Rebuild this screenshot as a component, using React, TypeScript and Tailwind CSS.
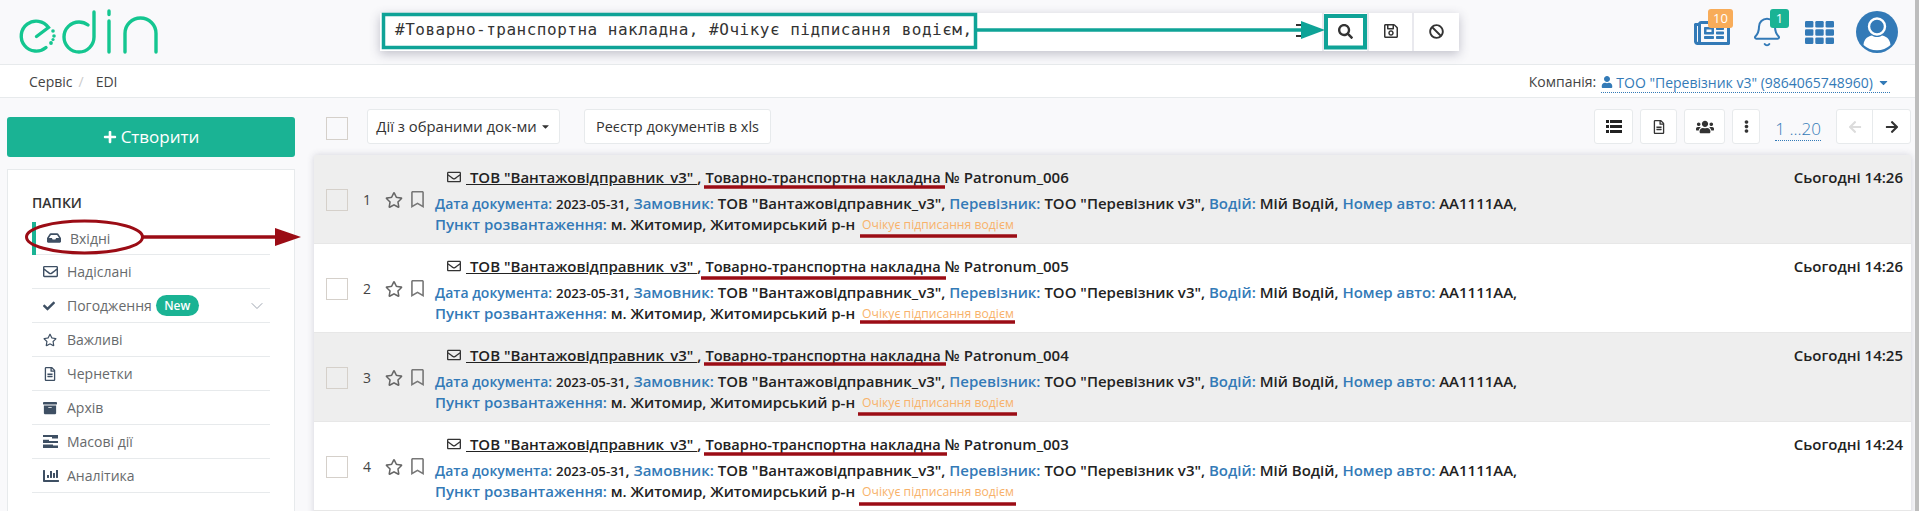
import React from "react";
import {
  FaSearch, FaRegSave, FaBan, FaRegNewspaper, FaInbox, FaRegEnvelope, FaCheck, FaRegStar, FaRegFileAlt,
  FaArchive, FaChartBar, FaRegBookmark, FaUsers, FaEllipsisV, FaArrowLeft, FaArrowRight, FaUser,
  FaPlus, FaCaretDown,
} from "react-icons/fa";
import { Bell, ChevronDown } from "lucide-react";

const rows = [
  { n: 1, id: "Patronum_006", time: "Сьогодні 14:26", grey: true },
  { n: 2, id: "Patronum_005", time: "Сьогодні 14:26", grey: false },
  { n: 3, id: "Patronum_004", time: "Сьогодні 14:25", grey: true },
  { n: 4, id: "Patronum_003", time: "Сьогодні 14:24", grey: false },
];

function Logo() {
  return (
    <svg width="150" height="50" viewBox="15 8 150 50" fill="none" stroke="#14c690" strokeWidth="3.4" strokeLinecap="round">
      <path d="M46 47.5 A15 15 0 1 1 48.5 27.5 L36.5 36.5" />
      <circle cx="53" cy="31" r="1.8" fill="#14c690" stroke="none" />
      <circle cx="54" cy="36" r="1.8" fill="#14c690" stroke="none" />
      <circle cx="53" cy="39.5" r="1.6" fill="#14c690" stroke="none" />
      <circle cx="51" cy="43" r="1.9" fill="#14c690" stroke="none" />
      <path d="M94 12 V37 A15 15 0 1 1 79 22 A15 15 0 0 1 88 25" />
      <path d="M109 11 V14.5 M109 21 V52" />
      <path d="M125 52 V33.5 A15.5 15.5 0 0 1 156 33.5 V52" />
    </svg>
  );
}

function Annotations() {
  const red = "#9b0c15";
  const teal = "#0fa397";
  const lines = [
    [704, 945, 187, 860, 1017, 236],
    [701, 946, 278, 860, 1015, 322],
    [704, 946, 364, 858, 1017, 414],
    [704, 947, 454, 859, 1016, 504],
  ];
  return (
    <svg className="absolute left-0 top-0 pointer-events-none" width="1919" height="511" fill="none">
      <rect x="383.5" y="14.5" width="592" height="33" stroke={teal} strokeWidth="3.5" />
      <path d="M977 30 H1303" stroke={teal} strokeWidth="3.5" />
      <path d="M1296 25 H1302 M1296 36 H1302" stroke="#333" strokeWidth="2" />
      <path d="M1301 21 L1325 30 L1301 39 Z" fill={teal} />
      <rect x="1326" y="16" width="39" height="31.5" stroke={teal} strokeWidth="4" />
      <ellipse cx="84.5" cy="237" rx="58" ry="16" stroke={red} strokeWidth="3" />
      <path d="M142 237 H276" stroke={red} strokeWidth="3.5" />
      <path d="M275 228 L301 237 L275 246 Z" fill={red} />
      {lines.map((l, i) => (
        <g key={i} stroke={red} strokeWidth="3.5">
          <path d={`M${l[0]} ${l[2]} H${l[1]}`} />
          <path d={`M${l[3]} ${l[5]} H${l[4]}`} />
        </g>
      ))}
    </svg>
  );
}

function Header() {
  return (
    <header className="h-[65px] flex border-b border-[#e7eaec] bg-[#f9f9fb]">
      <div className="w-[380px] shrink-0 pt-[8px] pl-[15px]">
        <Logo />
      </div>
      <div className="w-[1079px] h-[38px] mt-[13px] shrink-0 flex bg-[#e9e9ee] shadow-[0_3px_10px_rgba(60,60,90,0.3)]">
        <div className="w-[942px] bg-white pl-[15px] pr-0 flex items-center h-full text-[#333] text-[16px] tracking-[0.5px] font-['DejaVu_Sans_Mono',monospace] whitespace-nowrap pb-[5px]">
          #Товарно-транспортна накладна, #Очікує підписання водієм,
        </div>
        <div className="w-[43px] ml-[2px] bg-white flex items-center justify-center text-[#333] pb-[2px]">
          <FaSearch size={15} />
        </div>
        <div className="w-[43px] ml-[2px] bg-white flex items-center justify-center text-[#333] pb-[2px]">
          <FaRegSave size={16} />
        </div>
        <div className="w-[45px] ml-[2px] bg-white flex items-center justify-center text-[#333] pb-[2px]">
          <FaBan size={15} />
        </div>
      </div>
      <div className="relative ml-[235px] mt-[15px] w-[35px] h-[30px] text-[#337ab7]">
        <FaRegNewspaper size={36} />
        <span className="absolute left-[14px] top-[-6px] w-[25px] h-[19px] rounded-[3px] bg-[#f8ac59] text-white text-[13px] leading-[19px] text-center">10</span>
      </div>
      <div className="relative ml-[22px] mt-[16px] w-[29px] h-[30px] text-[#337ab7]">
        <Bell size={32} strokeWidth={1.5} />
        <span className="absolute left-[19px] top-[-7px] w-[19px] h-[19px] rounded-[3px] bg-[#1ab394] text-white text-[13px] leading-[19px] text-center">1</span>
      </div>
      <svg className="ml-[25px] mt-[21px]" width="29" height="23" viewBox="0 0 29 23" fill="#337ab7">
        {[0, 8.3, 16.6].map((y) =>
          [0, 10.3, 20.6].map((x) => <rect key={`${x}-${y}`} x={x} y={y} width="8.4" height="6.4" rx="1.2" />)
        )}
      </svg>
      <svg className="ml-[22px] mt-[11px]" width="42" height="42" viewBox="0 0 42 42">
        <circle cx="21" cy="21" r="21" fill="#337ab7" />
        <circle cx="21" cy="15.5" r="8" fill="#337ab7" stroke="#fff" strokeWidth="2.4" />
        <path d="M7.5 34 C8 27 13 25 16 24.5 C19 26.5 23 26.5 26 24.5 C29 25 34 27 34.5 34 A20 20 0 0 1 7.5 34 Z" fill="#fff" />
      </svg>
    </header>
  );
}

function Breadcrumb() {
  return (
    <div className="h-[33px] bg-white border-b border-[#e7eaec] flex items-center pl-[29px] pr-[25px] text-[14px] text-[#444]">
      <span>Сервіс</span>
      <span className="ml-[6px] text-[#ccc]">/</span>
      <span className="ml-[12px]">EDI</span>
      <span className="ml-auto mr-[5px]">Компанія:</span>
      <span className="flex items-center text-[#337ab7] border-b border-dotted border-[#337ab7] leading-[19px] mt-[3px]">
        <FaUser size={12} className="mr-[3px]" />
        ТОО "Перевізник v3" (9864065748960)
        <FaCaretDown size={13} className="ml-[4px]" />
      </span>
    </div>
  );
}

function BulkIcon() {
  return (
    <svg width="15" height="13" viewBox="0 0 15 13" fill="#3e4f63">
      <path d="M0 0h15v3.4H9V2H0z" />
      <path d="M0 4.8h6v1.2h9v2H0z" />
      <path d="M0 9.6h10v1h5v2.4H0z" />
    </svg>
  );
}

const menuItems = [
  { icon: <FaRegEnvelope size={15} />, label: "Надіслані" },
  { icon: <FaCheck size={12} />, label: "Погодження", badge: true },
  { icon: <FaRegStar size={14} />, label: "Важливі" },
  { icon: <FaRegFileAlt size={14} />, label: "Чернетки" },
  { icon: <FaArchive size={14} />, label: "Архів" },
  { icon: <BulkIcon />, label: "Масові дії" },
  { icon: <FaChartBar size={16} />, label: "Аналітика" },
];

function Sidebar() {
  return (
    <aside className="w-[288px] ml-[7px] shrink-0 pt-[19px]">
      <div className="h-[40px] rounded-[3px] bg-[#1ab394] text-white text-[17px] flex items-center justify-center gap-[4px]">
        <FaPlus size={14} />
        Створити
      </div>
      <div className="mt-[12px] h-[400px] bg-white border border-[#e7eaec] pt-[23px] pl-[24px] pr-[24px]">
        <div className="text-[14px] font-semibold text-[#333] h-[20px] leading-[20px] mb-[9px]">ПАПКИ</div>
        <div className="h-[33px] border-b border-[#e7eaec] flex items-center relative pl-[15px] text-[#676a6c] text-[14px]">
          <span className="absolute left-0 top-0 w-[4px] h-[33px] bg-[#1ab394]" />
          <FaInbox size={14} className="text-[#3e4f63]" />
          <span className="ml-[9px]">Вхідні</span>
        </div>
        {menuItems.map((m) => (
          <div key={m.label} className="h-[34px] border-b border-[#e7eaec] flex items-center text-[#676a6c] text-[14px]">
            <span className="w-[35px] pl-[11px] text-[#3e4f63] shrink-0">{m.icon}</span>
            <span>{m.label}</span>
            {m.badge && (
              <>
                <span className="ml-[4px] h-[21px] w-[43px] rounded-full bg-[#1ab394] text-white text-[12px] font-semibold leading-[21px] text-center">New</span>
                <ChevronDown size={20} strokeWidth={1} className="ml-auto mr-[3px] text-[#8a93a0]" />
              </>
            )}
          </div>
        ))}
      </div>
    </aside>
  );
}

function ToolBtn({ w, children }: { w: string; children: React.ReactNode }) {
  return (
    <div className={`${w} h-[35px] bg-white border border-[#e7eaec] rounded-[3px] flex items-center justify-center text-[#333]`}>
      {children}
    </div>
  );
}

function ListIcon() {
  return (
    <svg width="16" height="13" viewBox="0 0 16 13" fill="#222">
      <path d="M0 0h3v3H0zM4 0h12v3H4zM0 5h3v3H0zM4 5h12v3H4zM0 10h3v3H0zM4 10h12v3H4z" />
    </svg>
  );
}

function Toolbar() {
  return (
    <div className="h-[57px] pt-[11px] pl-[12px] flex items-start text-[14px]">
      <div className="w-[22px] h-[23px] mt-[8px] border border-[#d5d0ca] bg-[#f9f9fb]" />
      <div className="ml-[19px] w-[193px] h-[35px] bg-white border border-[#e7eaec] rounded-[3px] flex items-center justify-center text-[#333] text-[14.8px]">
        Дії з обраними док-ми
        <FaCaretDown size={11} className="ml-[3px]" />
      </div>
      <div className="ml-[24px] w-[187px] h-[35px] bg-white border border-[#e7eaec] rounded-[3px] flex items-center justify-center text-[#333] text-[14.5px]">
        Реєстр документів в xls
      </div>
      <div className="ml-auto flex items-start">
        <ToolBtn w="w-[39px]"><ListIcon /></ToolBtn>
        <div className="ml-[7px]"><ToolBtn w="w-[37px]"><FaRegFileAlt size={14} /></ToolBtn></div>
        <div className="ml-[7px]"><ToolBtn w="w-[41px]"><FaUsers size={18} /></ToolBtn></div>
        <div className="ml-[7px]"><ToolBtn w="w-[28px]"><FaEllipsisV size={13} /></ToolBtn></div>
        <span className="ml-[15px] mt-[9px] h-[23px] leading-[22px] text-[17px] text-[#337ab7] border-b border-dotted border-[#337ab7] font-light whitespace-nowrap">1 ...20</span>
        <div className="ml-[15px] flex h-[35px] bg-white border border-[#e7eaec] rounded-[3px]">
          <div className="w-[36px] border-r border-[#e7eaec] flex items-center justify-center text-[#dcdcdc]"><FaArrowLeft size={14} /></div>
          <div className="w-[37px] flex items-center justify-center text-[#333]"><FaArrowRight size={14} /></div>
        </div>
      </div>
    </div>
  );
}

function Label({ children }: { children: React.ReactNode }) {
  return <span className="text-[#337ab7]">{children}</span>;
}

function Row({ n, id, time, grey }: { n: number; id: string; time: string; grey: boolean }) {
  return (
    <div className={`h-[89px] flex border-b border-[#e7e7e7] ${grey ? "bg-[#eeeeee]" : "bg-white"}`}>
      <div className="w-[121px] shrink-0 flex items-start pl-[12px] pt-[34px] text-[#444]">
        <div className={`w-[22px] h-[22px] border border-[#d5d0ca] ${grey ? "bg-[#eeeeee]" : "bg-white"}`} />
        <span className="ml-[15px] text-[14px] leading-[22px] w-[22px]">{n}</span>
        <FaRegStar size={18} className="mt-[2px] text-[#666]" />
        <FaRegBookmark size={17} className="ml-[6px] mt-[2px] text-[#777]" />
      </div>
      <div className="flex-1 pr-[8px] text-[15px] font-semibold text-[#222] pt-[13px]">
        <div className="flex items-center h-[18px] leading-[18px]">
          <FaRegEnvelope size={14} className="ml-[12px] mr-[5px] text-[#333]" />
          <span className="underline whitespace-pre"> ТОВ "Вантажовідправник_v3" </span>
          <span className="mr-[4px]">,</span>
          <span className="whitespace-pre text-[14.6px]">Товарно-транспортна накладна</span>
          <span className="whitespace-pre"> № {id}</span>
          <span className="ml-auto">{time}</span>
        </div>
        <div className="h-[21px] leading-[21px] mt-[7px] whitespace-pre">
          <span className="text-[14px]"><Label>Дата документа:</Label></span> <span className="text-[13.3px]">2023-05-31</span>, <Label>Замовник:</Label> ТОВ "Вантажовідправник_v3", <Label>Перевізник:</Label> ТОО "Перевізник v3", <Label>Водій:</Label> Мій Водій, <Label>Номер авто:</Label> AA1111AA,
        </div>
        <div className="h-[21px] leading-[21px] whitespace-pre flex items-center">
          <Label>Пункт розвантаження:</Label><span> м. Житомир, Житомирський р-н </span>
          <span className="text-[#f8b26a] text-[12.2px] font-normal ml-[3px]">Очікує підписання водієм</span>
        </div>
      </div>
    </div>
  );
}

export default function App() {
  return (
    <div className="relative h-[511px] overflow-hidden flex bg-[#f9f9fb] font-['Open_Sans',sans-serif]">
      <div className="w-[1915px] shrink-0">
        <Header />
        <Breadcrumb />
        <div className="flex">
          <Sidebar />
          <div className="w-[1597px] ml-[19px] shrink-0">
            <Toolbar />
            <div className="h-[400px] bg-[#eeeeee] shadow-[0_0_7px_rgba(60,60,90,0.2)] rounded-t-[3px] overflow-hidden">
              {rows.map((r) => (
                <Row key={r.n} {...r} />
              ))}
            </div>
          </div>
        </div>
      </div>
      <div className="w-[4px] bg-[#bdbdbd]" />
      <Annotations />
    </div>
  );
}
